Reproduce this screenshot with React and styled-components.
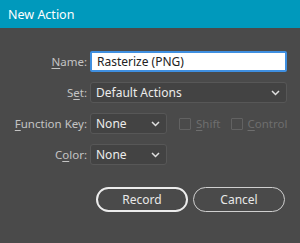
import React from 'react'
import styled, { createGlobalStyle } from 'styled-components';

const GlobalStyle = createGlobalStyle`
  html, body {
    margin: 0;
    padding: 0;
    background: #4a4a4a;
  }
  * { box-sizing: border-box; }
`

const Dialog = styled.div`
  width: 300px;
  height: 243px;
  background-color: #4a4a4a;
  font-family: "Noto Sans", "Open Sans", sans-serif;
  font-size: 11.5px;
  color: #cfcfcf;
  display: flex;
  flex-direction: column;
`

const TitleBar = styled.div`
  height: 28px;
  background-color: #0099bc;
  color: #ffffff;
  display: flex;
  align-items: center;
  padding-left: 8px;
  font-size: 12.5px;
`

const Body = styled.div`
  padding: 23px 15px 0 0;
  display: flex;
  flex-direction: column;
  gap: 22px;
`

const Form = styled.div`
  display: grid;
  grid-template-columns: 87px 1fr;
  column-gap: 3px;
  row-gap: 10px;
  grid-auto-rows: 21px;
  align-items: center;
`

const Label = styled.label`
  text-align: right;
  color: #c4c4c4;
  white-space: nowrap;
  & u { text-decoration-thickness: 1px; text-underline-offset: 2px; }
`

const TextInput = styled.input`
  height: 21px;
  width: 100%;
  border: 2px solid #3f8fe0;
  border-radius: 2px;
  background: #ffffff;
  color: #222;
  font-family: inherit;
  font-size: 12px;
  padding: 0 5px;
  outline: none;
`

const SelectBox = styled.div`
  height: 21px;
  width: ${p => p.$width || '100%'};
  border: 1px solid #575757;
  border-radius: 3px;
  background: #434343;
  color: #ececec;
  font-size: 12px;
  display: flex;
  align-items: center;
  justify-content: space-between;
  padding: 0 6px 0 5px;
  flex-shrink: 0;
`

const FieldRow = styled.div`
  display: flex;
  align-items: center;
`

const Check = styled.span`
  display: flex;
  align-items: center;
  gap: 5px;
  color: #6e6e6e;
  margin-left: ${p => p.$ml}px;
  & u { text-decoration-thickness: 1px; text-underline-offset: 2px; }
`

const Box = styled.span`
  width: 12px;
  height: 12px;
  border: 1px solid #626262;
  border-radius: 1px;
`

const Buttons = styled.div`
  display: flex;
  justify-content: flex-end;
  gap: 5px;
`

const Button = styled.button`
  width: 92px;
  height: 25px;
  border-radius: 13px;
  background: transparent;
  border: ${p => p.$primary ? '2px solid #ececec' : '1px solid #cfcfcf'};
  color: #e8e8e8;
  font-family: inherit;
  font-size: 12px;
  padding: 0;
`

function Chevron() {
  return (
    <svg width="9" height="6" viewBox="0 0 9 6">
      <path d="M1 1 L4.5 4.5 L8 1" fill="none" stroke="#e0e0e0" strokeWidth="1.5" />
    </svg>
  )
}

function Select({ value, width }) {
  return (
    <SelectBox $width={width}>
      <span>{value}</span>
      <Chevron />
    </SelectBox>
  )
}

export default function App() {
  return (
    <>
      <GlobalStyle />
      <Dialog>
        <TitleBar>New Action</TitleBar>
        <Body>
          <Form>
            <Label><u>N</u>ame:</Label>
            <TextInput defaultValue="Rasterize (PNG)" />

            <Label>S<u>e</u>t:</Label>
            <Select value="Default Actions" />

            <Label><u>F</u>unction Key:</Label>
            <FieldRow>
              <Select value="None" width="77px" />
              <Check $ml={12}><Box /><span><u>S</u>hift</span></Check>
              <Check $ml={10}><Box /><span><u>C</u>ontrol</span></Check>
            </FieldRow>

            <Label>C<u>o</u>lor:</Label>
            <FieldRow>
              <Select value="None" width="77px" />
            </FieldRow>
          </Form>
          <Buttons>
            <Button $primary>Record</Button>
            <Button>Cancel</Button>
          </Buttons>
        </Body>
      </Dialog>
    </>
  )
}
